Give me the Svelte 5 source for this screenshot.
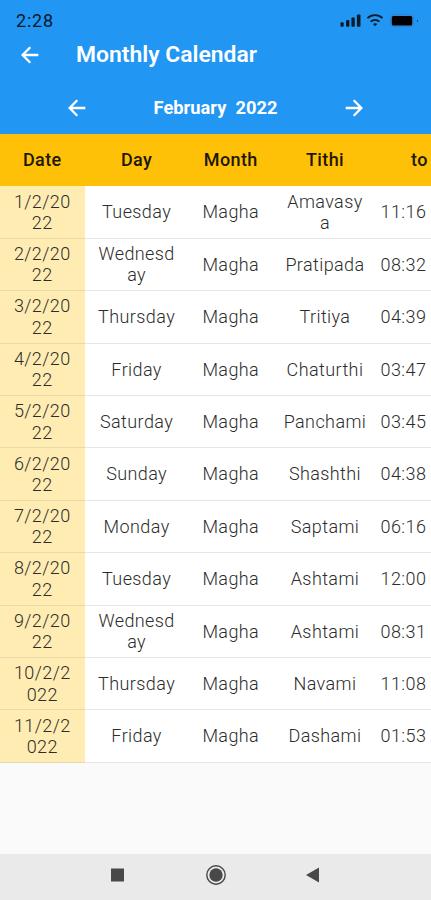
<script>
  const rows = [
    ['1/2/20', '22', 'Tuesday', '', 'Amavasy', 'a', '11:16'],
    ['2/2/20', '22', 'Wednesd', 'ay', 'Pratipada', '', '08:32'],
    ['3/2/20', '22', 'Thursday', '', 'Tritiya', '', '04:39'],
    ['4/2/20', '22', 'Friday', '', 'Chaturthi', '', '03:47'],
    ['5/2/20', '22', 'Saturday', '', 'Panchami', '', '03:45'],
    ['6/2/20', '22', 'Sunday', '', 'Shashthi', '', '04:38'],
    ['7/2/20', '22', 'Monday', '', 'Saptami', '', '06:16'],
    ['8/2/20', '22', 'Tuesday', '', 'Ashtami', '', '12:00'],
    ['9/2/20', '22', 'Wednesd', 'ay', 'Ashtami', '', '08:31'],
    ['10/2/2', '022', 'Thursday', '', 'Navami', '', '11:08'],
    ['11/2/2', '022', 'Friday', '', 'Dashami', '', '01:53']
  ];
</script>

{#snippet arrow(right)}
  <svg class="arrow" class:right viewBox="0 0 18 18" width="18" height="18">
    <path d="M17.3 9H2M9.3 1.2L1.6 9l7.7 7.8" fill="none" stroke="#fff" stroke-width="2.3" />
  </svg>
{/snippet}

<div class="screen">
  <div class="status">
    <span class="clock">2:28</span>
    <svg width="80" height="18" viewBox="0 0 80 18" fill="#0b1a2b">
      <rect x="0.5" y="10.2" width="3.2" height="4.6" rx="1" />
      <rect x="6" y="8" width="3.4" height="6.8" rx="1" />
      <rect x="11.4" y="5.6" width="3.4" height="9.2" rx="1" />
      <rect x="16.9" y="2.6" width="3.6" height="12.2" rx="1" />
      <g fill="none" stroke="#0b1a2b" stroke-width="1.9">
        <path d="M27.5 6.1c4.3-4 10.6-4 15 0" />
        <path d="M30.6 9.6c2.6-2.3 6.2-2.3 8.8 0" />
      </g>
      <path d="M33 12c1.3-1 2.9-1 4.2 0l-2.1 2.2z" />
      <rect x="50.5" y="2.8" width="23" height="11.8" rx="3" fill="none" stroke="#3b7fbd" stroke-width="1" />
      <rect x="51.8" y="4" width="20.4" height="9.4" rx="1.5" fill="#000" />
      <path d="M77 7.4q1.8 1.4 0 2.8z" />
    </svg>
  </div>
  <header>
    {@render arrow(false)}
    <h1>Monthly Calendar</h1>
  </header>
  <nav>
    {@render arrow(false)}
    <span class="period">February&nbsp; 2022</span>
    {@render arrow(true)}
  </nav>

  <div class="row head">
    <div class="date">Date</div>
    <div class="cell">Day</div>
    <div class="cell">Month</div>
    <div class="cell">Tithi</div>
    <div class="time to">to</div>
  </div>
  {#each rows as [d1, d2, w1, w2, t1, t2, time]}
    <div class="row">
      <div class="date"><span>{d1}</span><span>{d2}</span></div>
      <div class="cell"><span>{w1}</span>{#if w2}<span>{w2}</span>{/if}</div>
      <div class="cell">Magha</div>
      <div class="cell"><span>{t1}</span>{#if t2}<span>{t2}</span>{/if}</div>
      <div class="time">{time} AM</div>
    </div>
  {/each}

  <footer>
    <svg width="431" height="46" viewBox="0 0 431 46" fill="#484848">
      <rect x="111" y="14.5" width="13" height="13" />
      <circle cx="216" cy="21" r="9.2" fill="none" stroke="#484848" stroke-width="1.4" />
      <circle cx="216" cy="21" r="6.7" />
      <path d="M306 21l13-7.5v15z" />
    </svg>
  </footer>
</div>

<style>
  .screen {
    width: 431px;
    height: 900px;
    overflow: hidden;
    display: flex;
    flex-direction: column;
    background: #fafafa;
    font-family: Roboto, sans-serif;
  }
  .status {
    height: 32px;
    flex: none;
    background: #2196f3;
    display: flex;
    justify-content: space-between;
    padding: 0 11px 0 16px;
    box-sizing: border-box;
  }
  .status svg { margin-top: 12px; }
  .clock {
    font-size: 18px;
    line-height: 20px;
    margin-top: 11px;
    letter-spacing: 0.8px;
    color: #0b1a2b;
    font-weight: 450;
  }
  header {
    height: 45px;
    flex: none;
    background: #2196f3;
    display: flex;
    align-items: center;
    padding-left: 21px;
  }
  h1 {
    margin: -1px 0 0 37px;
    font-size: 22.9px;
    font-weight: 600;
    color: #fff;
    white-space: nowrap;
  }
  nav {
    height: 57px;
    padding: 4px 68px 0;
    box-sizing: border-box;
    flex: none;
    background: #2196f3;
    display: flex;
    align-items: center;
    justify-content: space-between;
  }
  .period {
    font-size: 18.3px;
    font-weight: 700;
    color: #fff;
  }
  .arrow { flex: none; }
  .right { transform: scaleX(-1); }
  .row {
    height: 52.4px;
    flex: none;
    box-sizing: border-box;
    display: flex;
    background: #fff;
    border-bottom: 1px solid #e6e6e6;
    font-size: 18px;
    font-weight: 350;
    line-height: 21.4px;
    letter-spacing: 0.4px;
    color: #2c2c2c;
    white-space: nowrap;
  }
  .date, .cell, .time {
    display: flex;
    flex-direction: column;
    justify-content: center;
    align-items: center;
    flex: none;
  }
  .date {
    width: 84.5px;
    margin-right: 5px;
    margin-bottom: -1px;
    background: #ffecb3;
    border-bottom: 1px solid #e8d9aa;
    box-sizing: border-box;
  }
  .cell { width: 94.2px; }
  .time { align-items: flex-start; margin-left: 8.5px; }
  .head {
    background: #ffc107;
    border: none;
    font-weight: 500;
    color: #1d1704;
  }
  .head .date { background: none; border: none; margin-bottom: 0; }
  .to { margin-left: 39px; }
  footer {
    margin-top: auto;
    height: 46px;
    background: #eaeaea;
  }
  footer svg { display: block; }
</style>
